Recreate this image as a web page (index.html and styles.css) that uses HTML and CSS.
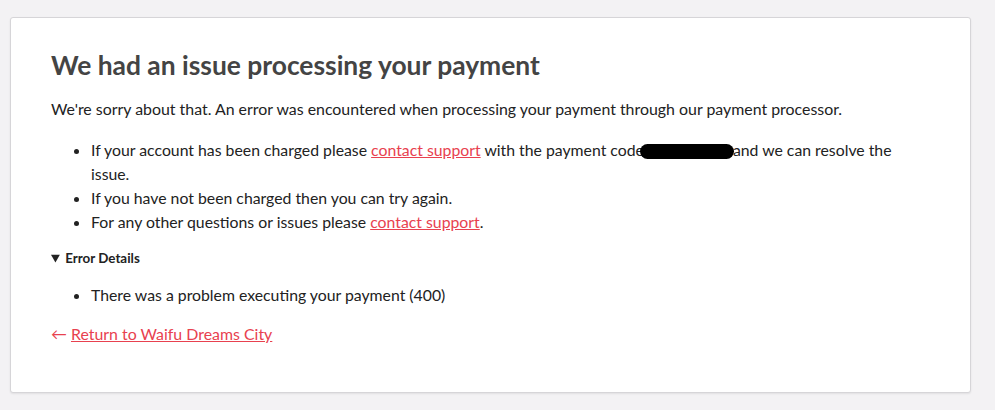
FILE: index.html
```html
<!DOCTYPE html>
<html lang="en">
<head>
    <meta charset="UTF-8">
    <title>Payment Error</title>
    <link rel="stylesheet" href="styles.css">
</head>
<body>

<div class="card">
    <h1>We had an issue processing your payment</h1>
    <p>We're sorry about that. An error was encountered when processing your payment through our payment processor.</p>
    <ul class="notes">
        <li>If your account has been charged please <a href="#">contact support</a> with the payment code<span class="redacted"></span>and we can resolve the issue.</li>
        <li>If you have not been charged then you can try again.</li>
        <li>For any other questions or issues please <a href="#">contact support</a>.</li>
    </ul>
    <details open>
        <summary>Error Details</summary>
        <ul class="errors">
            <li>There was a problem executing your payment (400)</li>
        </ul>
    </details>
    <p class="back"><span class="arrow">&larr;</span> <a href="#">Return to Waifu Dreams City</a></p>
</div>

</body>
</html>
```

FILE: styles.css
```css
body {
    font-family: Lato, "Open Sans", sans-serif;
    margin: 0;
    padding: 17px 24px 17px 10px;
    background-color: #f3f2f4;
    color: #222;
}
.card {
    background-color: #ffffff;
    border: 1px solid #d6d5d8;
    border-radius: 3px;
    box-shadow: 0 1px 2px rgba(0,0,0,0.08);
    padding: 30px 40px 46px 40px;
}
h1 {
    font-size: 26.4px;
    font-weight: 700;
    color: #444;
    margin: 0 0 15px 0;
    line-height: 34px;
}
p {
    font-size: 15.9px;
    line-height: 24px;
    margin: 0 0 17px 0;
}
ul {
    font-size: 15.8px;
    line-height: 24px;
    margin: 0;
    padding-left: 40px;
}
ul.notes {
    margin-bottom: 16px;
}
ul.errors {
    margin-bottom: 15px;
}
a {
    color: #e8414f;
}
.redacted {
    display: inline-block;
    width: 94px;
    height: 15px;
    margin: 0 -1px -3px -4px;
    background: #000;
    border-radius: 8px;
}
summary {
    font-size: 13.4px;
    font-weight: 700;
    line-height: 16px;
    margin-bottom: 17px;
}
.back {
    margin: 0;
}
.arrow {
    color: #e8414f;
}
```
